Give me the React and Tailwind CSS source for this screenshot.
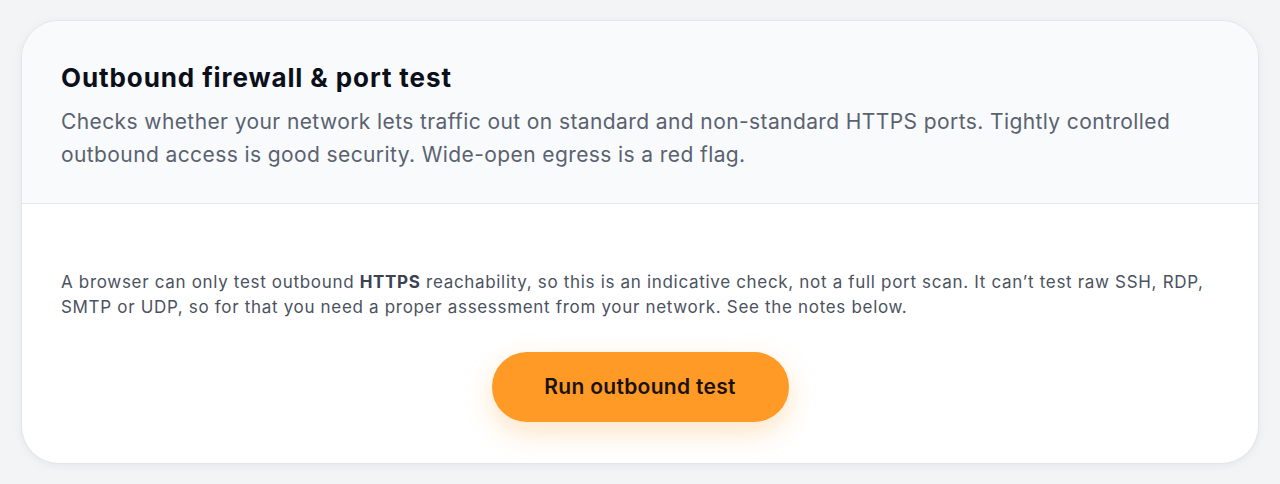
export default function App() {
  return (
    <div className="min-h-[484px] w-full bg-[#f3f4f6] px-[21px] pt-[20px] pb-[21px]" style={{ fontFamily: 'Inter, "Noto Sans", sans-serif' }}>
      <div className="overflow-hidden rounded-[38px] border border-[#e2e5ea] bg-white shadow-[0_2px_10px_rgba(15,23,42,0.06)]">
        <div className="border-b border-[#e2e5ea] bg-[#f8fafc] px-[39px] pt-[40px] pb-[32px]">
          <h2 className="text-[26px] font-bold leading-[34px] tracking-[0.9px] text-[#0b0f19]">Outbound firewall &amp; port test</h2>
          <p className="mt-[10px] text-[21px] leading-[33px] tracking-[0.4px] text-[#5a6270]">
            Checks whether your network lets traffic out on standard and non-standard HTTPS ports. Tightly controlled outbound access is good security. Wide-open egress is a red flag.
          </p>
        </div>
        <div className="px-[39px] pt-[66px] pb-[41px]">
          <p className="text-[17px] leading-[25px] tracking-[0.68px] text-[#4b5261]">
            A browser can only test outbound <strong className="font-bold text-[#3b4251]">HTTPS</strong> reachability, so this is an indicative check, not a full port scan. It can’t test raw SSH, RDP, SMTP or UDP, so for that you need a proper assessment from your network. See the notes below.
          </p>
          <div className="mt-[32px] flex justify-center">
            <button className="h-[70px] w-[297px] rounded-full bg-[#ff9a26] text-[21px] font-semibold tracking-[0.3px] text-[#1a1208] shadow-[0_10px_28px_rgba(255,154,38,0.28)]">
              Run outbound test
            </button>
          </div>
        </div>
      </div>
    </div>
  );
}
